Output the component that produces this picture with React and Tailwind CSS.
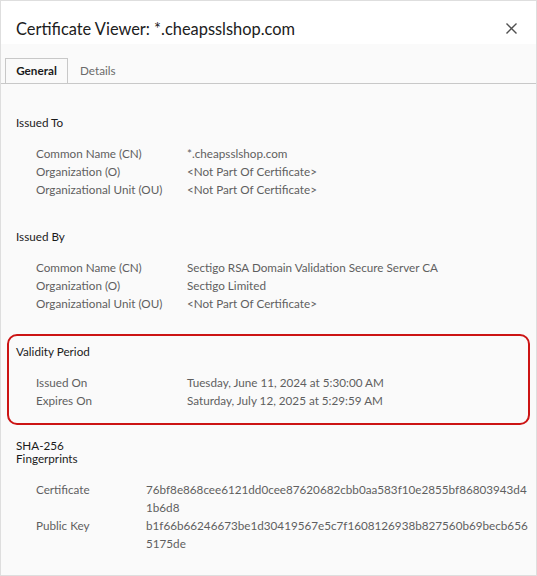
const font = { fontFamily: '"Segoe UI", Lato, "Open Sans", sans-serif' }

const issuedTo = [
  ['Common Name (CN)', '*.cheapsslshop.com'],
  ['Organization (O)', '<Not Part Of Certificate>'],
  ['Organizational Unit (OU)', '<Not Part Of Certificate>'],
]

const issuedBy = [
  ['Common Name (CN)', 'Sectigo RSA Domain Validation Secure Server CA'],
  ['Organization (O)', 'Sectigo Limited'],
  ['Organizational Unit (OU)', '<Not Part Of Certificate>'],
]

const validity = [
  ['Issued On', 'Tuesday, June 11, 2024 at 5:30:00 AM'],
  ['Expires On', 'Saturday, July 12, 2025 at 5:29:59 AM'],
]

// hashes wrap where the viewer wraps them
const fingerprints = [
  ['Certificate', ['76bf8e868cee6121dd0cee87620682cbb0aa583f10e2855bf86803943d4', '1b6d8']],
  ['Public Key', ['b1f66b66246673be1d30419567e5c7f1608126938b827560b69becb656', '5175de']],
]

function Rows({ rows, labelWidth = 'w-[151px]' }) {
  return (
    <div className="pl-5">
      {rows.map(([label, value]) => (
        <div key={label} className="flex text-[11.7px] leading-[18px] text-[#5f5f5f]">
          <div className={`${labelWidth} shrink-0`}>{label}</div>
          <div>
            {Array.isArray(value) ? value.map(line => <div key={line}>{line}</div>) : value}
          </div>
        </div>
      ))}
    </div>
  )
}

export default function App() {
  return (
    <div className="w-[537px] h-[576px] border border-[#dedede] bg-[#fafafa] flex flex-col overflow-hidden" style={font}>
      {/* Title bar */}
      <div className="h-[43px] bg-white flex items-end justify-between pl-[15px] pr-[17px] pb-[3px]">
        <div className="text-[16.4px] leading-[24px] text-[#202020]">Certificate Viewer: *.cheapsslshop.com</div>
        <button className="w-[16px] h-[16px] mb-[5px] flex items-center justify-center text-[#505050]">
          <svg width="11" height="11" viewBox="0 0 11 11" fill="none" stroke="currentColor" strokeWidth="1.4">
            <path d="M0.5 0.5 L10.5 10.5 M10.5 0.5 L0.5 10.5" />
          </svg>
        </button>
      </div>

      {/* Tabs */}
      <div className="pt-[14px] pl-[4px] flex border-b border-[#c8c8c8]">
        <div className="h-[25px] w-[63px] -mb-px border border-b-0 border-[#c8c8c8] bg-[#fafafa] flex items-center justify-center text-[11.7px] font-bold text-[#1a1a1a]">
          General
        </div>
        <div className="h-[25px] px-[12px] flex items-center text-[11.7px] text-[#6a6a6a]">Details</div>
      </div>

      {/* Content */}
      <div className="pt-[27px]">
        <div className="mx-[6px] px-[7px] border-2 border-transparent">
          <div className="text-[11.7px] leading-[18px] text-[#1a1a1a]">Issued To</div>
          <div className="mt-[13px]">
            <Rows rows={issuedTo} />
          </div>
        </div>

        <div className="mx-[6px] px-[7px] border-2 border-transparent mt-[25px]">
          <div className="text-[11.7px] leading-[18px] text-[#1a1a1a]">Issued By</div>
          <div className="mt-[13px]">
            <Rows rows={issuedBy} />
          </div>
        </div>

        <div className="mx-[6px] px-[7px] mt-[20px] border-2 border-[#cc1414] rounded-[10px] pt-[6px] pb-[14px]">
          <div className="text-[11.7px] leading-[18px] text-[#1a1a1a]">Validity Period</div>
          <div className="mt-[13px]">
            <Rows rows={validity} />
          </div>
        </div>

        <div className="mx-[6px] px-[7px] border-2 border-transparent mt-[12px]">
          <div className="w-[80px] text-[11.7px] leading-[13px] text-[#1a1a1a]">SHA-256 Fingerprints</div>
          <div className="mt-[15px]">
            <Rows rows={fingerprints} labelWidth="w-[110px]" />
          </div>
        </div>
      </div>
    </div>
  )
}
